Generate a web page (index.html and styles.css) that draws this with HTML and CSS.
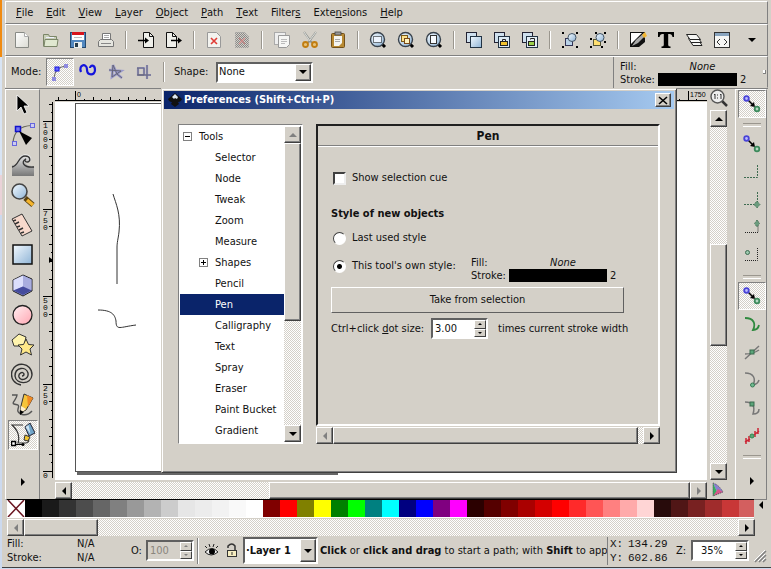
FILE: index.html
```html
<!DOCTYPE html>
<html lang="en">
<head>
<meta charset="utf-8">
<title>Inkscape</title>
<link rel="stylesheet" href="styles.css">
</head>
<body>
<svg class="defs" aria-hidden="true">
  <defs>
    <linearGradient id="g-blue" x1="0" y1="0" x2="1" y2="1"><stop offset="0" stop-color="#f4faff"/><stop offset="1" stop-color="#8fb4d6"/></linearGradient>
    <linearGradient id="g-paper" x1="0" y1="0" x2="1" y2="1"><stop offset="0" stop-color="#ffffff"/><stop offset="1" stop-color="#dcdcd4"/></linearGradient>
    <linearGradient id="g-pink" x1="0" y1="0" x2="1" y2="1"><stop offset="0" stop-color="#fff0f2"/><stop offset="1" stop-color="#ffa6b2"/></linearGradient>
    <linearGradient id="g-wave" x1="0" y1="0" x2="0" y2="1"><stop offset="0" stop-color="#eeeeee"/><stop offset="1" stop-color="#777777"/></linearGradient>
    <pattern id="dither" width="2" height="2" patternUnits="userSpaceOnUse"><path d="M0 0h1v1H0zM1 1h1v1H1z" fill="#888"/></pattern>
    <symbol id="up" viewBox="0 0 8 8"><path d="M0 6h8L4 2z"/></symbol>
    <symbol id="down" viewBox="0 0 8 8"><path d="M0 2h8L4 6z"/></symbol>
    <symbol id="left" viewBox="0 0 8 8"><path d="M6 0v8L2 4z"/></symbol>
    <symbol id="right" viewBox="0 0 8 8"><path d="M2 0v8l4-4z"/></symbol>
    <symbol id="snap" viewBox="0 0 20 20">
      <path d="M6 6l5 5" stroke="#000" stroke-width="1.6"/><path d="M13 13l-5-1 4-4z"/>
      <circle cx="4.500" cy="4.500" r="2.300" fill="#bbf" stroke="#4a44d8" stroke-width="1.800"/>
      <circle cx="15" cy="15" r="2.300" fill="#b5d9c3" stroke="#3d8a5c" stroke-width="1.800"/>
    </symbol>
    <symbol id="lens" viewBox="0 0 18 18">
      <path d="M12.500 12.500l3.500 3.500" stroke="#000" stroke-width="3"/>
      <circle cx="8.500" cy="8.500" r="7" fill="url(#g-blue)" stroke="#39424c" stroke-width="1.400"/>
    </symbol>
  </defs>
</svg>

<div class="window">
  <nav class="menu" aria-label="Main menu">
    <button><u>F</u>ile</button><button><u>E</u>dit</button><button><u>V</u>iew</button><button><u>L</u>ayer</button><button><u>O</u>bject</button><button><u>P</u>ath</button><button><u>T</u>ext</button><button>Filter<u>s</u></button><button>Exte<u>n</u>sions</button><button><u>H</u>elp</button>
  </nav>

  <div class="commands" role="toolbar" aria-label="Commands">
    <button aria-label="New"><svg width="18" height="18"><path d="M2.500 1.500h9l4 4v11h-13z" fill="url(#g-paper)" stroke="#888a85"/><path d="M11.500 1.500v4h4" fill="#fff" stroke="#aaa"/></svg></button>
    <button aria-label="Open"><svg width="18" height="18"><path d="M2.500 15.500v-12h5l1 2h7v3" fill="#c8cfb8" stroke="#7b8668"/><path d="M3 15.500l1-7h13l-1 7z" fill="#e0e8d0" stroke="#7b8668"/><path d="M5 6.500h8" stroke="#eef"/></svg></button>
    <button aria-label="Save"><svg width="18" height="18"><rect x="1.500" y="1.500" width="15" height="15" fill="#5288c0" stroke="#244a70"/><rect x="3" y="1" width="12" height="8" fill="#fff"/><rect x="3" y="1" width="12" height="3" fill="#d8151c"/><path d="M5 6.500h8" stroke="#bbb"/><rect x="5" y="11" width="8" height="6" fill="#e8eeee"/><rect x="6" y="12" width="3" height="4" fill="#253b4b"/></svg></button>
    <button aria-label="Print"><svg width="18" height="18"><path d="M5.500 9V2.500h8V9" fill="#fff" stroke="#777"/><path d="M7 4.500h5M7 6.500h5" stroke="#aaa"/><path d="M1.500 15.500v-5l2-2h11l2 2v5z" fill="#e6e6e0" stroke="#777"/><path d="M4 12.500h10" stroke="#888"/></svg></button>
    <i class="sep"></i>
    <button aria-label="Import"><svg width="18" height="18"><path d="M6.500 1.500h6l4 4v11h-10z" fill="#efefea" stroke="#111"/><path d="M12.500 1.500v4h4" fill="none" stroke="#111"/><path d="M1 9.500h9" stroke="#000" stroke-width="1.500"/><path d="M8 6.500v6l4-3z"/></svg></button>
    <button aria-label="Export"><svg width="18" height="18"><path d="M1.500 1.500h6l4 4v11h-10z" fill="#efefea" stroke="#111"/><path d="M7.500 1.500v4h4" fill="none" stroke="#111"/><path d="M6 9.500h8" stroke="#000" stroke-width="1.500"/><path d="M13 6.500v6l4-3z"/></svg></button>
    <i class="sep"></i>
    <button aria-label="Undo"><svg width="18" height="18"><path d="M2.500 1.500h9l4 4v11h-13z" fill="#f3f3ef" stroke="#999"/><path d="M6 7l6 6M12 7l-6 6" stroke="#e03c36" stroke-width="1.600"/></svg></button>
    <button aria-label="Redo"><svg width="18" height="18"><path d="M2.500 1.500h9l4 4v11h-13z" fill="url(#dither)" stroke="#999" stroke-dasharray="1 1"/><path d="M6 7l6 6M12 7l-6 6" stroke="#c88a88" stroke-width="1.200"/></svg></button>
    <i class="sep"></i>
    <button aria-label="Copy"><svg width="18" height="18"><rect x="1.500" y="1.500" width="11" height="12" fill="#eee" stroke="#aaa"/><path d="M5.500 4.500h11v9l-3 3h-8z" fill="#f6f6f4" stroke="#999"/><path d="M8 8.500h6M8 10.500h6M8 12.500h4" stroke="#bbb"/></svg></button>
    <button aria-label="Cut"><svg width="18" height="18"><path d="M3 1l8 11M15 1L7 12" stroke="#8f938e" stroke-width="2"/><path d="M3 1l6 9M15 1L9 9" stroke="#f5f5f5" stroke-width=".8"/><circle cx="4.500" cy="13.500" r="2.500" fill="#e6c27a" stroke="#c17d11" stroke-width="1.800"/><circle cx="13.500" cy="13.500" r="2.500" fill="#e6c27a" stroke="#c17d11" stroke-width="1.800"/></svg></button>
    <button aria-label="Paste"><svg width="18" height="18"><rect x="2.500" y="2.500" width="13" height="14" rx="1" fill="#b98a33" stroke="#72501a"/><path d="M5 5h8v7l-3 3H5z" fill="#f5f5f0"/><rect x="6" y="1" width="6" height="3" fill="#999" stroke="#444" stroke-width=".8"/><path d="M6 8.500h5M6 10.500h5" stroke="#aaa"/></svg></button>
    <i class="sep"></i>
    <button aria-label="Zoom selection"><svg width="18" height="18"><use href="#lens"/><rect x="4.500" y="5.500" width="8" height="6" fill="#eef5ff" stroke="#000" stroke-dasharray="1 1"/></svg></button>
    <button aria-label="Zoom drawing"><svg width="18" height="18"><use href="#lens"/><rect x="4.500" y="4.500" width="6" height="6" fill="#ffe28a" stroke="#7a5a1a"/><rect x="7.500" y="7.500" width="5" height="5" fill="#fff4c0" stroke="#7a4a1a"/></svg></button>
    <button aria-label="Zoom page"><svg width="18" height="18"><use href="#lens"/><rect x="5.500" y="4.500" width="6" height="8" fill="#f7fbff" stroke="#333"/></svg></button>
    <i class="sep"></i>
    <button aria-label="Duplicate"><svg width="18" height="18"><rect x="1.500" y="1.500" width="10" height="10" fill="#cfe0ee" stroke="#223"/><rect x="5.500" y="5.500" width="11" height="11" fill="url(#g-blue)" stroke="#234"/></svg></button>
    <button aria-label="Clone"><svg width="18" height="18"><rect x="1.500" y="1.500" width="10" height="10" fill="#cfe0ee" stroke="#223"/><rect x="5.500" y="5.500" width="11" height="11" fill="#dce9f4" stroke="#234"/><path d="M9.500 10V8.500h3V10" fill="none" stroke="#222"/><rect x="7.500" y="10.500" width="7" height="4" fill="#f2c230" stroke="#222"/></svg></button>
    <button aria-label="Unlink clone"><svg width="18" height="18"><rect x="1.500" y="1.500" width="10" height="10" fill="#cfe0ee" stroke="#223"/><rect x="5.500" y="5.500" width="11" height="11" fill="#e3edf5" stroke="#234"/><path d="M9.500 8.500V7.500h4V10" fill="none" stroke="#222"/><rect x="7.500" y="10.500" width="6" height="4" fill="#9bd04a" stroke="#222"/></svg></button>
    <i class="sep"></i>
    <button aria-label="Group"><svg width="18" height="18"><rect x="4.500" y="7.500" width="7" height="7" fill="#b9d2e8" stroke="#335"/><circle cx="11" cy="6.500" r="4" fill="url(#g-blue)" stroke="#456"/><path d="M1 1h2v2H1zM15 1h2v2h-2zM1 15h2v2H1zM15 15h2v2h-2z"/></svg></button>
    <button aria-label="Ungroup"><svg width="18" height="18"><rect x="4.500" y="8.500" width="7" height="6" fill="#ffdf70" stroke="#553"/><circle cx="11" cy="6.500" r="4" fill="url(#g-blue)" stroke="#456"/><path d="M1 7h2v2H1zM1 15h2v2H1zM12 15h2v2h-2zM6 1h2v2H6zM15 1h2v2h-2zM15 10h2v2h-2z"/></svg></button>
    <i class="sep"></i>
    <button aria-label="Fill and stroke"><svg width="18" height="18"><path d="M1 1h14L1 14z" fill="#fff"/><path d="M1 16V14L13 2h3v9l-6 5z" fill="#111"/><path d="M1 1.500h15M1.500 1v14" stroke="#111"/><path d="M3 15l4-6 8-7 2 2-8 8z" fill="#aaa"/><path d="M13 4l3-3 2 4-3 2z" fill="#f2b632"/></svg></button>
    <button aria-label="Text dialog"><svg width="18" height="18"><path d="M1 1h16v5h-1.500q-.5-3-3-3h-1.300v11q0 1.500 2.300 1.500V17H4.500v-1.500q2.300 0 2.300-1.500V3H5.500q-2.500 0-3 3H1z"/></svg></button>
    <button aria-label="Layers"><svg width="18" height="18"><g fill="#f6f6f4" stroke="#222"><path d="M5.500 10.500h9l2.500 4H8z"/><path d="M3.500 7.500h10l3 4H6z"/><path d="M1.500 3.500h10l4 5H5z"/></g></svg></button>
    <button aria-label="XML editor"><svg width="18" height="18"><rect x="1.500" y="1.500" width="15" height="15" fill="#f6f6f4" stroke="#333"/><path d="M2 3.500h14" stroke="#8aa5bf" stroke-width="3"/><path d="M7 8l-3 3 3 3M11 8l3 3-3 3" fill="none" stroke="#333"/></svg></button>
    <button class="more" aria-label="More commands"><svg width="8" height="8"><use href="#down"/></svg></button>
  </div>

  <div class="controls">
    <div class="mode">
      <span class="mode-label">Mode:</span>
      <button class="on" aria-label="Bezier"><svg width="20" height="20"><path d="M4 16Q5 5 16 4" fill="none" stroke="#666"/><path d="M2 15h4v4H2zM14 2h4v4h-4z" fill="#8f8be0"/><rect x="5" y="5" width="4" height="4" fill="#66f" stroke="#11d"/></svg></button>
      <button aria-label="Spiro"><svg width="20" height="20"><path d="M3 10C0 2 9 1 9 7.500S17 14 17 8 12 3 12 6" fill="none" stroke="#1414dc" stroke-width="2.200"/></svg></button>
      <button aria-label="Zigzag"><svg width="20" height="20"><path d="M3 8l12 1-9 6 1-12 4 9 5 4" fill="none" stroke="#99c" stroke-width="2.600"/><path d="M3 8l12 1-9 6 1-12 4 9 5 4" fill="none" stroke="#667"/></svg></button>
      <button aria-label="Paraxial"><svg width="20" height="20"><path d="M3 6h7v7H4V6M3 13h14M13 3v14" fill="none" stroke="#99c" stroke-width="2.200"/><path d="M3 6h7v7H4V6M3 13h14M13 3v14" fill="none" stroke="#667"/></svg></button>
      <i class="sep"></i>
      <label for="shape">Shape:</label>
      <span class="combo shape"><select id="shape"><option>None</option></select><b><svg width="8" height="8"><use href="#down"/></svg></b></span>
    </div>
    <div class="style">
      <span>Fill:</span><em>None</em><span></span>
      <span>Stroke:</span><i class="ink"></i><span>2</span>
    </div>
    <i class="nub"></i>
  </div>

  <div class="work">
    <div class="tools" role="toolbar" aria-label="Tools">
      <button aria-label="Selector"><svg width="24" height="24"><path d="M6 2v16l4-4 3 7 3-1.500-3-6.500h5z" stroke="#fff" stroke-width=".8"/></svg></button>
      <button aria-label="Node"><svg width="24" height="24"><path d="M2 20Q3 3 21 2.500" fill="none" stroke="#665" stroke-width="1.200"/><rect x="1.500" y="18.500" width="4" height="4" fill="#cce" stroke="#66d"/><rect x="19.500" y=".5" width="4" height="4" fill="#cce" stroke="#66d"/><rect x="4.500" y="3.500" width="5" height="5" fill="#77e" stroke="#11c" stroke-width="1.500"/><path d="M8 8l13 7-6 7z"/></svg></button>
      <button aria-label="Tweak"><svg width="24" height="24"><path d="M1 23V12q5 0 6-5c1-6 10-8 13-3 2 5-4 7-6 3 0 5 3 6 9 6v10z" fill="url(#g-wave)"/><path d="M1 14c7-1 6-11 13-11 6 0 6 6 2 6-3 0-2-3-1-3-6 3-2 9 8 8" fill="none" stroke="#333" stroke-width="1.300"/></svg></button>
      <button aria-label="Zoom"><svg width="24" height="24"><path d="M14 15l8 7" stroke="#5b4310" stroke-width="5"/><path d="M16 17l6 5" stroke="#f5b52e" stroke-width="3.500"/><circle cx="8.500" cy="8.500" r="7.500" fill="url(#g-blue)" stroke="#444" stroke-width="1.600"/></svg></button>
      <button aria-label="Measure"><svg width="24" height="24"><path d="M1 6l10-5 10 17-10 5z" fill="#f7d9cc" stroke="#333"/><path d="M2 8l3-1M4 11l4-2M6 14l3-1M8 17l4-2M10 20l3-1" stroke="#333" stroke-width="1.400"/></svg></button>
      <button aria-label="Rectangle"><svg width="24" height="24"><rect x="2" y="2" width="19" height="19" fill="url(#g-blue)" stroke="#111" stroke-width="1.500"/></svg></button>
      <button aria-label="3D box"><svg width="24" height="24"><path d="M2 7l10-5 9 4v12l-9 5-10-5z" fill="#9397d8" stroke="#222"/><path d="M2.500 7L12 2.500v11L2.500 17.500z" fill="#dcdffc"/><path d="M12 2.500l8.500 4V17L12 13.500z" fill="#a9addf"/><path d="M2.500 17.500L12 13.500l8.500 4L12 22z" fill="#454b9d"/></svg></button>
      <button aria-label="Ellipse"><svg width="24" height="24"><circle cx="11.500" cy="12" r="9.500" fill="url(#g-pink)" stroke="#222" stroke-width="1.300"/></svg></button>
      <button aria-label="Star"><svg width="24" height="24"><path d="M1 7l7-6 7 3-2 9-10 0z" fill="#fff4ae" stroke="#333"/><path d="M15 6l2.500 5.500 5.500.5-4 4 1.500 6-5.500-3-5.500 3L11 16l-4-4 5.500-.5z" fill="#ffe888" stroke="#333"/></svg></button>
      <button aria-label="Spiral"><svg width="24" height="24"><path d="M11 13q2 0 2-2c-1-3-6-1-5 3 2 5 10 2 9-4C15 3 4 4 4 13c1 9 16 9 17-1C21-1 4-2 1 8c-2 8 3 13 9 14" fill="none" stroke="#333" stroke-width="1.400"/></svg></button>
      <button aria-label="Pencil"><svg width="24" height="24"><path d="M1 2h5c0 4-6 8-3 9s6 0 4 5 8 9 14 2" fill="none" stroke="#555" stroke-width="1.400"/><path d="M13 1l9 4-7 12-6 3 1-7z" fill="#f6c43a" stroke="#333"/><path d="M16 2l6 3-5 9z" fill="#f08a24"/><path d="M10 13l5 3-6 5z" fill="#fff0d0"/><path d="M9 17l4 2-4 3z"/></svg></button>
      <button class="on" aria-label="Pen"><svg width="24" height="24"><path d="M12 2H1q9 8 6 18h8q5-1 1-6" fill="none" stroke="#333" stroke-width="1.200"/><path d="M14 4l5-4 5 10-6 3z" fill="#6fa4c8" stroke="#223"/><path d="M14.500 4l3-2 2 9z" fill="#cde4f3"/><path d="M14 12l5 2-2 4-4-1z" fill="#f2c62e" stroke="#333"/><path d="M.5 18.500h4v4h-4z" fill="#fff" stroke="#000" stroke-width="1.500"/><path d="M5 21.500h6" stroke="#000"/><circle cx="12" cy="21.500" r="1.500"/></svg></button>
      <button class="expand" aria-label="More tools"><svg width="8" height="8"><use href="#right"/></svg></button>
    </div>

    <div class="desk">
      <svg class="hruler" id="hruler" height="14"></svg>
      <div class="zoomfit"><svg width="18" height="18"><path d="M12 12l5 5" stroke="#333" stroke-width="2.500"/><circle cx="7.500" cy="7.500" r="6.500" fill="#eee" stroke="#555" stroke-width="1.400"/><path d="M4 6l1-1v5M7.500 5.500v1M7.500 8.500v1M10 6l1-1v5" fill="none" stroke="#333"/></svg></div>
      <svg class="vruler" id="vruler" width="15"></svg>
      <svg class="canvas" role="img" aria-label="Drawing">
        <path d="M22 370h261v3H22z" fill="#666"/>
        <rect x="20.500" y="1.500" width="261" height="368" fill="#fff" stroke="#555"/>
        <path d="M58 92c3 10 8 20 6 38-1 8-2 10-2 16v36M43 208c14 0 17 5 18 11 0 10 4 6 20 4" fill="none" stroke="#333"/>
      </svg>
      <div class="vscroll"><button aria-label="Scroll up"><svg width="8" height="8"><use href="#up"/></svg></button><i class="t117"></i><i class="thumb t101"></i><i class="t117"></i><button aria-label="Scroll down"><svg width="8" height="8"><use href="#down"/></svg></button></div>
      <i class="corner"></i>
      <div class="hscroll"><button aria-label="Scroll left"><svg width="8" height="8"><use href="#left"/></svg></button><i class="t198"></i><i class="thumb t422"></i><button class="off" aria-label="Scroll right"><svg width="8" height="8"><use href="#right"/></svg></button></div>
      <div class="cms"><svg width="14" height="15"><path d="M2 1q6 2 10 9l-5 2z" fill="#8a7fd0"/><path d="M2 1l5 11-5 2z" fill="#35b060"/><path d="M2 14l5-7 5 3z" fill="#d8588a"/><path d="M2 1q6 2 10 9L2 14z" fill="none" stroke="#555" stroke-dasharray="1 1"/></svg></div>
    </div>

    <div class="snaps" role="toolbar" aria-label="Snapping">
      <button class="on" aria-label="Enable snapping"><svg width="20" height="20"><use href="#snap"/></svg></button>
      <i class="hsep"></i>
      <button aria-label="Snap bounding boxes"><svg width="20" height="20"><use href="#snap"/></svg></button>
      <button aria-label="Snap edges"><svg width="20" height="20"><path d="M2 15.500h13.500V3" fill="none" stroke="#3d6b50" stroke-dasharray="2 1"/></svg></button>
      <button aria-label="Snap corners"><svg width="20" height="20"><path d="M2 14.500h13.500V2" fill="none" stroke="#3d6b50" stroke-dasharray="2 1"/><path d="M15 11l3 3.500-3 3.500-3-3.500z" fill="#6b9c7e" stroke="#3d6b50" stroke-dasharray="1 1"/></svg></button>
      <button aria-label="Snap edge midpoints"><svg width="20" height="20"><path d="M3 14.500h13V3" fill="none" stroke="#222" stroke-dasharray="1 1"/><path d="M15 2l2.500 3.500-2.500 3.500-2.500-3.500z" fill="#6b9c7e" stroke="#3d6b50" stroke-dasharray="1 1"/></svg></button>
      <button aria-label="Snap box centers"><svg width="20" height="20"><path d="M3 14.500h12.500V2" fill="none" stroke="#222" stroke-dasharray="1 1"/><circle cx="5.500" cy="6.500" r="2" fill="#9cc9ae" stroke="#3d6b50"/></svg></button>
      <i class="hsep"></i>
      <button class="on" aria-label="Snap nodes"><svg width="20" height="20"><use href="#snap"/></svg></button>
      <button aria-label="Snap paths"><svg width="20" height="20"><path d="M3 4c9 0 11 6 8 12q5 0 6-5" fill="none" stroke="#2f8a3f" stroke-width="1.800"/></svg></button>
      <button aria-label="Snap intersections"><svg width="20" height="20"><path d="M3 17L17 4M3 12q8 0 14-4" fill="none" stroke="#777" stroke-width="1.500"/><rect x="8" y="8" width="4" height="4" fill="#5aa579" stroke="#3a6b4e"/></svg></button>
      <button aria-label="Snap cusp nodes"><svg width="20" height="20"><path d="M3 3c9 0 11 6 8 12q5-1 6-5" fill="none" stroke="#777" stroke-width="1.500"/><circle cx="10.500" cy="15" r="2" fill="#6fba90" stroke="#3a7b55"/></svg></button>
      <button aria-label="Snap smooth nodes"><svg width="20" height="20"><path d="M3 4c9 0 10 6 8 12q6 0 6-5" fill="none" stroke="#777" stroke-width="1.500"/><rect x="8" y="4" width="4" height="4" fill="#5aa579" stroke="#3a6b4e"/></svg></button>
      <button aria-label="Snap midpoints"><svg width="20" height="20"><path d="M4 12v6M7 10v6M13 5v6M16 2v6M3 16l5-3M12 9l5-4" stroke="#cc2434" stroke-width="1.500"/><circle cx="10" cy="10" r="2" fill="#5aa579" stroke="#2d8a4d"/></svg></button>
      <i class="hsep"></i>
      <button class="expand" aria-label="More snapping"><svg width="8" height="8"><use href="#right"/></svg></button>
    </div>
  </div>

  <div class="palette"><div class="swatches" id="swatches"><button class="none" aria-label="None"><svg width="18" height="17"><path d="M1 0l16 17M17 0L1 17" stroke="#6a1520" stroke-width="1.500"/></svg></button></div><button class="palmenu" aria-label="Palette menu"><svg width="8" height="8"><use href="#left"/></svg></button></div>
  <div class="palscroll"><div class="hscroll"><button class="off" aria-label="Scroll palette left"><svg width="8" height="8"><use href="#left"/></svg></button><i class="thumb t72"></i><i class="t643"></i><button aria-label="Scroll palette right"><svg width="8" height="8"><use href="#right"/></svg></button></div></div>

  <div class="status">
    <div class="fs"><span>Fill:</span><span>N/A</span><span>Stroke:</span><span>N/A</span></div>
    <label for="opacity">O:</label>
    <span class="spin opacity off"><input id="opacity" value="100" disabled><b><button aria-label="Raise opacity"><svg width="4" height="4"><use href="#up"/></svg></button><button aria-label="Lower opacity"><svg width="4" height="4"><use href="#down"/></svg></button></b></span>
    <i class="vsep"></i>
    <button class="eye" aria-label="Layer visibility"><svg width="16" height="14"><path d="M1 8q7-7 13 0-7 6-13 0z" fill="#eee" stroke="#222"/><circle cx="8" cy="7.500" r="3"/><path d="M3 4L1 2M6 3L5 0M9 3l1-3M12 4l2-2" stroke="#222"/></svg></button>
    <button class="lock" aria-label="Layer lock"><svg width="14" height="16"><path d="M3 5V3q4-4 7 0v4" fill="none" stroke="#333" stroke-width="1.500"/><rect x="2.500" y="7.500" width="9" height="6" fill="#f6edc0" stroke="#333"/><path d="M7 9v3" stroke="#333"/></svg></button>
    <span class="combo layer"><select aria-label="Layer"><option>·Layer 1</option></select><b><svg width="8" height="8"><use href="#down"/></svg></b></span>
    <p class="hint"><b>Click</b> or <b>click and drag</b> to start a path; with <b>Shift</b> to app</p>
    <div class="xy"><span>X:</span><span>134.29</span><span>Y:</span><span>602.86</span></div>
    <label for="zoom">Z:</label>
    <span class="spin zoom"><input id="zoom" value="35%"><b><button aria-label="Zoom in"><svg width="4" height="4"><use href="#up"/></svg></button><button aria-label="Zoom out"><svg width="4" height="4"><use href="#down"/></svg></button></b></span>
    <svg class="grip" width="13" height="13"><path d="M1 12L12 1M5 12l7-7M9 12l3-3" stroke="#808080" stroke-width="1.500"/><path d="M0 11L11 0M4 11l7-7M8 11l3-3" stroke="#fff"/></svg>
  </div>

  <section class="dialog" role="dialog" aria-labelledby="dlg-title">
    <header><svg width="16" height="16"><path d="M8 1l7 6q-1 3-4 3l1 2-4 3-4-3 1-2Q2 10 1 7z" fill="#111"/><path d="M8 2l3 3-1 2-2-1-1 1-2-2z" fill="#dde6ee"/></svg><h1 id="dlg-title">Preferences (Shift+Ctrl+P)</h1><button aria-label="Close"><svg width="10" height="9"><path d="M1 1l8 7M9 1L1 8" stroke="#000" stroke-width="1.600"/></svg></button></header>
    <div class="panes">
      <div class="treebox">
        <ul class="tree">
          <li class="root"><i class="box"><svg width="7" height="7"><path d="M1 3.500h5" stroke="#000"/></svg></i>Tools</li>
          <li>Selector</li><li>Node</li><li>Tweak</li><li>Zoom</li><li>Measure</li>
          <li class="sub"><i class="box"><svg width="7" height="7"><path d="M1 3.500h5M3.500 1v5" stroke="#000"/></svg></i>Shapes</li>
          <li>Pencil</li><li class="sel">Pen</li><li>Calligraphy</li><li>Text</li><li>Spray</li><li>Eraser</li><li>Paint Bucket</li><li>Gradient</li>
        </ul>
        <div class="vscroll"><button class="off" aria-label="Scroll list up"><svg width="8" height="8"><use href="#up"/></svg></button><i class="thumb t178"></i><i class="t106"></i><button aria-label="Scroll list down"><svg width="8" height="8"><use href="#down"/></svg></button></div>
      </div>
      <div class="right">
        <div class="page">
          <h2>Pen</h2>
          <form>
            <label class="line"><input type="checkbox">Show selection cue</label>
            <h3>Style of new objects</h3>
            <label class="line last"><input type="radio" name="style">Last used style</label>
            <div class="own"><label class="line"><input type="radio" name="style" checked>This tool's own style:</label>
              <div class="style"><span>Fill:</span><em>None</em><span></span><span>Stroke:</span><i class="ink"></i><span>2</span></div></div>
            <button type="button" class="take">Take from selection</button>
            <div class="dot"><label for="dot">Ctrl+click <u>d</u>ot size:</label><span class="spin"><input id="dot" value="3.00"><b><button type="button" aria-label="Larger dot"><svg width="4" height="4"><use href="#up"/></svg></button><button type="button" aria-label="Smaller dot"><svg width="4" height="4"><use href="#down"/></svg></button></b></span><span>times current stroke width</span></div>
          </form>
        </div>
        <div class="hscroll"><button class="off" aria-label="Scroll page left"><svg width="8" height="8"><use href="#left"/></svg></button><i class="thumb t306"></i><i class="t5"></i><button aria-label="Scroll page right"><svg width="8" height="8"><use href="#right"/></svg></button></div>
      </div>
    </div>
  </section>
</div>
<script src="script.js"></script>
</body>
</html>
```
FILE: styles.css
```css
* { box-sizing: border-box; }
html, body { height: 100%; }
body {
  margin: 0;
  padding: 0 0 1px 2px;
  overflow: hidden;
  background: linear-gradient(#f08a10 0 57px, #d8e4f4 57px 175px, #ead2d8 175px 215px, #ccd9ee 215px);
  font: 11px/14px "DejaVu Sans Condensed", "Noto Sans", sans-serif;
  color: #111;
}
button, input, select { font: inherit; color: inherit; margin: 0; padding: 0; border: 0; background: none; border-radius: 0; }
button { display: flex; align-items: center; justify-content: center; flex: none; }
svg { display: block; flex: none; }
i { font-style: normal; }
.defs { position: absolute; width: 0; height: 0; }

.window {
  position: relative;
  height: 100%;
  display: flex;
  flex-direction: column;
  background: #d4d0c8;
  padding: 1px 3px 2px 3px;
  border-bottom: 1px solid #404040;
}
.menu, .commands, .controls { border: 1px solid; border-color: #fff #808080 #808080 #fff; display: flex; align-items: center; flex: none; }
.menu { height: 23px; padding-left: 3px; }
.menu button { padding: 0 6px 0 7px; }
.commands { height: 32px; padding-left: 2px; }
.commands button { width: 28px; height: 28px; }
.sep { flex: none; width: 12px; height: 18px; display: flex; }
.sep::before { content: ""; width: 2px; margin: 0 5px; border-left: 1px solid #9a968e; border-right: 1px solid #fff; }
.commands .more { margin-left: 2px; }
.controls { height: 32px; border-bottom-color: #d4d0c8; }
.mode { flex: 1; display: flex; align-items: center; padding-left: 5px; }
.mode-label { width: 35px; }
.mode button { width: 28px; height: 28px; }
.mode .sep { margin: 0 4px 0 0; height: 20px; }
.mode label { width: 42px; }
.on, .tools .on { border: 1px solid; border-color: #808080 #fff #fff #808080; background: repeating-conic-gradient(#fff 0 25%, #d4d0c8 0 50%) 0 0 / 2px 2px; }
.style { display: grid; grid-template-columns: 38px 1fr 12px; grid-template-rows: 13px 13px; line-height: 13px; }
.style em { text-align: center; padding-left: 10px; }
.style span:last-child { padding-left: 3px; }
.ink { background: #000; }
.controls .style { width: 136px; height: 31px; border-left: 1px solid #808080; padding: 2px 0 0 6px; align-content: center; }
.nub { width: 3px; height: 4px; margin: 0 1px 0 14px; background: #fff; border-bottom: 1px solid #808080; border-right: 1px solid #808080; }

.combo { display: flex; background: #fff; border: 2px solid; border-color: #606060 #fff #fff #606060; }
.combo select { appearance: none; flex: 1; min-width: 0; padding-left: 1px; outline: 0; }
.combo b, .vscroll button, .hscroll button, .thumb, .spin b button, .dialog header button {
  background: #d4d0c8; border: 1px solid; border-color: #fff #404040 #404040 #fff; box-shadow: inset -1px -1px #808080;
}
.combo b { width: 16px; display: flex; align-items: center; justify-content: center; }
.shape { width: 97px; height: 21px; }

.work { flex: 1; min-height: 0; display: grid; grid-template-columns: 35px minmax(0, 1fr) 33px; border-top: 1px solid #808080; }
.tools { border: 1px solid; border-color: #fff #808080 #808080 #fff; display: flex; flex-direction: column; }
.tools button { height: 30px; width: 30px; margin-left: 2px; }
.tools .expand { margin-top: 15px; height: 34px; }
.snaps { border: 1px solid; border-color: #fff #808080 #808080 #fff; display: flex; flex-direction: column; padding-left: 2px; margin-right: 1px; }
.snaps button { width: 28px; height: 28px; }
.hsep { height: 12px; display: flex; }
.hsep::before { content: ""; width: 18px; height: 2px; margin: 5px; border-top: 1px solid #9a968e; border-bottom: 1px solid #fff; }
.snaps .expand { margin-top: 5px; }
.desk { display: grid; grid-template-columns: 15px minmax(0, 1fr) 20px; grid-template-rows: 13px minmax(0, 1fr) 20px; padding-right: 8px; }
.hruler { grid-column: 1 / 3; width: 100%; }
.vruler, .canvas { height: 100%; }
.canvas { width: 100%; background: #fff; }
.zoomfit { padding-left: 3px; height: 21px; }
.cms { padding: 2px 0 0 4px; }
.desk .vscroll { margin: 8px 0 0 3px; }
.desk .hscroll { margin-top: 2px; }
.vscroll, .hscroll { display: flex; background: repeating-conic-gradient(#fff 0 25%, #d4d0c8 0 50%) 0 0 / 2px 2px; }
.vscroll { flex-direction: column; width: 17px; flex: none; }
.hscroll { height: 17px; }
.vscroll button, .hscroll button { width: 17px; height: 17px; }
.off { fill: #808080; color: #8a867e; }
.t5 { flex: 5; } .t72 { flex: 72; } .t101 { flex: 101; } .t106 { flex: 106; } .t117 { flex: 117; } .t178 { flex: 178; }
.t198 { flex: 198; } .t306 { flex: 306; } .t422 { flex: 422; } .t643 { flex: 643; }

.palette { height: 20px; display: flex; margin: 2px 0 0 2px; flex: none; }
.swatches { flex: 1; display: flex; border-top: 1px solid #000; border-bottom: 1px solid #fff; height: 19px; overflow: hidden; }
.swatches button { width: 17px; height: 17px; }
.swatches .none { width: 18px; background: #fff; }
.palmenu { width: 14px; height: 12px; }
.palscroll { padding: 0 13px 0 2px; flex: none; }

.status { height: 29px; display: flex; align-items: center; flex: none; padding-left: 2px; }
.fs { width: 124px; display: grid; grid-template-columns: 70px 1fr; }
.status > label { width: 15px; }
.spin { display: flex; height: 21px; background: #fff; border: 2px solid; border-color: #606060 #fff #fff #606060; }
.spin input { flex: 1; min-width: 0; padding-left: 2px; outline: 0; }
.spin b { width: 12px; display: flex; flex-direction: column; }
.spin b button { flex: 1; width: 12px; box-shadow: none; }
.spin.off { background: #d4d0c8; }
.opacity { width: 48px; }
.vsep { width: 2px; height: 26px; border-left: 1px solid #808080; border-right: 1px solid #fff; margin: 0 4px 0 3px; }
.eye { width: 18px; }
.lock { width: 22px; }
.layer { width: 75px; height: 27px; font-weight: bold; }
.hint { flex: 1; min-width: 0; margin: 0 0 0 2px; white-space: nowrap; }
.xy { width: 69px; flex: none; display: grid; grid-template-columns: 18px 1fr; border-left: 1px solid #808080; padding-left: 2px; font-family: "Liberation Mono", monospace; }
.zoom { width: 58px; }
.zoom input { padding-left: 8px; }
.grip { margin: 12px 1px 0 5px; }

.dialog {
  position: absolute; left: 159px; top: 88px; right: 94px; height: 385px;
  background: #d4d0c8; border: 1px solid; border-color: #d4d0c8 #404040 #404040 #d4d0c8;
  box-shadow: inset 1px 1px #fff, inset -1px -1px #808080; padding: 2px;
  display: flex; flex-direction: column;
}
.dialog header { height: 18px; display: flex; align-items: center; padding: 0 3px; background: linear-gradient(90deg, #0a246a, #a6caf0); }
.dialog h1 { flex: 1; margin: 0 0 0 1px; font-size: 11px; line-height: 14px; color: #fff; }
.dialog header button { width: 16px; height: 14px; }
.panes { flex: 1; min-height: 0; display: flex; gap: 13px; padding: 15px 14px 26px; }
.treebox { width: 125px; flex: none; display: flex; background: #fff; border: 1px solid; border-color: #808080 #fff #fff #808080; padding: 1px; }
.tree { list-style: none; margin: 0; padding: 0; flex: 1; overflow: hidden; }
.tree li { height: 21px; padding: 0 0 0 35px; white-space: nowrap; display: flex; align-items: center; }
.tree .sel { background: #0a246a; color: #fff; }
.tree .root { padding-left: 3px; }
.tree .sub { padding-left: 19px; }
.box { width: 9px; height: 9px; margin-right: 7px; border: 1px solid #808080; }
.right { flex: 1; min-width: 0; display: flex; flex-direction: column; gap: 1px; }
.page { flex: 1; border: 2px solid; border-color: #202020 #fff #fff #202020; }
.page h2 { margin: 0; height: 20px; font-size: 12px; line-height: 20px; text-align: center; border-bottom: 1px solid #808080; box-shadow: 0 1px #fff; }
form { padding: 23px 34px 0 13px; display: flex; flex-direction: column; }
.line { display: flex; align-items: center; height: 18px; gap: 6px; padding-left: 2px; }
.line input { appearance: none; width: 13px; height: 13px; flex: none; background: #fff; border: 2px solid; border-color: #404040 #eee #eee #404040; }
.line input[type=radio] { border-width: 1px; border-radius: 50%; border-color: #404040 #fff #fff #404040; }
.line input[type=radio]:checked { background: radial-gradient(circle, #000 0 2px, #fff 3px); }
form h3 { margin: 20px 0 8px; font-size: 11px; line-height: 14px; }
.own { display: flex; justify-content: space-between; margin: 9px 0 5px; padding-right: 5px; }
.own .line { margin-top: 1px; }
.own .style { width: 148px; }
.take { height: 26px; border: 1px solid; border-color: #fff #606060 #606060 #fff; }
.dot { display: flex; align-items: center; margin-top: 5px; white-space: nowrap; }
.dot label { width: 100px; flex: none; }
.dot .spin { width: 57px; flex: none; margin-right: 10px; }
```
FILE: script.js
```js
const NS = "http://www.w3.org/2000/svg";
const swatches = ("000000 1a1a1a 333333 4d4d4d 666666 808080 999999 b3b3b3 cccccc e6e6e6 ececec f2f2f2 f9f9f9 ffffff " +
  "800000 ff0000 808000 ffff00 008000 00ff00 008080 00ffff 000080 0000ff 800080 ff00ff " +
  "2b0000 550000 800000 aa0000 d40000 ff0000 ff2a2a ff5555 ff8080 ffaaaa ffd5d5 " +
  "280b0b 501616 782121 a02c2c c83737 d35f5f").split(" ");
const row = document.getElementById("swatches");
for (const hex of swatches) {
  const b = document.createElement("button");
  b.style.background = "#" + hex;
  b.setAttribute("aria-label", "#" + hex);
  row.append(b);
}

function add(svg, name, attrs, text) {
  const el = document.createElementNS(NS, name);
  for (const k in attrs) el.setAttribute(k, attrs[k]);
  if (text !== undefined) el.textContent = text;
  svg.append(el);
}

// Horizontal ruler: a major tick every 250 units, origin at the page's left edge.
// The labels between the first and the last lie behind the dialog and are left out.
const h = document.getElementById("hruler");
let d = "M15 11.500H667";
for (let i = -2; i < 72; i++) {
  const x = Math.round(35 + i * 8.75) + 0.5;
  d += `M${x} 12V${i % 10 === 0 ? 2 : i % 2 === 0 ? 8 : 10}`;
}
add(h, "path", { d, stroke: "#000" });
for (const n of [0, 7]) {
  add(h, "text", { x: Math.round(37 + n * 87.5), y: 8, "font-family": "Liberation Sans, sans-serif", "font-size": 7 }, String(n * 250));
}

// Vertical ruler: labels are stacked digit by digit under their tick.
const v = document.getElementById("vruler");
d = "M12.500 0V376";
for (let i = 0; i < 43; i++) {
  const y = Math.round(369 - i * 8.75) + 0.5;
  d += `M13 ${y}H${i % 10 === 0 ? 3 : i % 2 === 0 ? 9 : 11}`;
}
add(v, "path", { d, stroke: "#000" });
for (let n = 0; n <= 4; n++) {
  String(n * 250).split("").forEach((c, k) =>
    add(v, "text", { x: 3, y: Math.round(376 - n * 87.5) + k * 7, "font-family": "Liberation Mono, monospace", "font-size": 8 }, c));
}
add(v, "path", { d: "M9 155v6l4-3z" });
```
